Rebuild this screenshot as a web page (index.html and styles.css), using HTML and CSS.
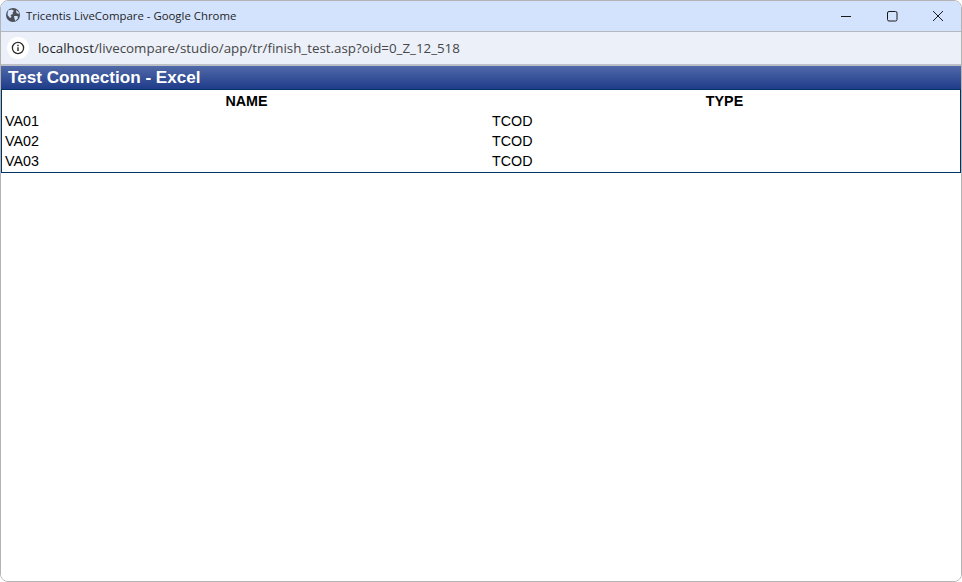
FILE: index.html
```html
<!DOCTYPE html>
<html lang="en">
<head>
<meta charset="utf-8">
<title>Tricentis LiveCompare - Google Chrome</title>
<link rel="stylesheet" href="styles.css">
</head>
<body>
<div class="window">
  <header class="titlebar">
    <svg class="globe" width="14" height="14" viewBox="0 0 14 14"><circle cx="7" cy="7" r="7" fill="#4b4f57"/><path d="M2 2.5 L6 1.5 L8 3 L6.5 4.5 L7 6 L4.5 7 L5.5 9 L4 10 L1.5 7 Z M8 8 L11.5 8 L12 10 L9.5 13 L8.5 11 Z M10 2 L12.5 4 L13 6 L10.5 5 Z" fill="#d3e3fd"/></svg>
    <span class="title">Tricentis LiveCompare - Google Chrome</span>
    <div class="controls">
      <svg width="14" height="14" viewBox="0 0 14 14"><path d="M2 8.5H12" stroke="#1a1a1a" stroke-width="1" fill="none"/></svg>
      <svg width="14" height="14" viewBox="0 0 14 14"><rect x="2.5" y="3.5" width="9.5" height="9.5" rx="1.5" stroke="#1a1a1a" stroke-width="1" fill="none"/></svg>
      <svg width="14" height="14" viewBox="0 0 14 14"><path d="M2 3L12 13M12 3L2 13" stroke="#1a1a1a" stroke-width="1" fill="none"/></svg>
    </div>
  </header>
  <div class="addressbar">
    <span class="info"><svg width="14" height="14" viewBox="0 0 14 14"><circle cx="7" cy="7" r="5.6" stroke="#2b2b2b" stroke-width="1.3" fill="none"/><path d="M7 6.2V10" stroke="#2b2b2b" stroke-width="1.4"/><path d="M7 3.8V5.2" stroke="#2b2b2b" stroke-width="1.4"/></svg></span>
    <span class="url"><span class="host">localhost</span>/livecompare/studio/app/tr/finish_test.asp?oid=0_Z_12_518</span>
  </div>
  <main class="page">
    <h1 class="heading">Test Connection - Excel</h1>
    <table class="results">
      <thead>
        <tr><th class="col-name">NAME</th><th>TYPE</th></tr>
      </thead>
      <tbody>
        <tr><td>VA01</td><td>TCOD</td></tr>
        <tr><td>VA02</td><td>TCOD</td></tr>
        <tr class="last"><td>VA03</td><td>TCOD</td></tr>
      </tbody>
    </table>
  </main>
</div>
</body>
</html>
```
FILE: styles.css
```css
* { box-sizing: border-box; }
html, body { margin: 0; padding: 0; height: 100%; background: #ffffff; overflow: hidden; }
.window {
  width: 962px;
  height: 582px;
  border: 1px solid #b4b4b4;
  border-radius: 8px;
  overflow: hidden;
  background: #ffffff;
  display: flex;
  flex-direction: column;
}
.titlebar {
  height: 31px;
  flex: none;
  background: #d3e3fd;
  display: flex;
  align-items: center;
  padding: 0 0 2px 5px;
  border-bottom: 1px solid #b4b8bf;
}
.globe { flex: none; }
.title {
  margin-left: 6px;
  font: 11.4px "Open Sans", sans-serif;
  color: #1f1f1f;
  white-space: nowrap;
}
.controls {
  margin-left: auto;
  display: flex;
  gap: 32px;
  padding-right: 16px;
  align-items: center;
}
.addressbar {
  height: 34px;
  flex: none;
  background: #ebf0f9;
  display: flex;
  align-items: center;
  padding-left: 6px;
  border-bottom: 2px solid #bcbfc5;
}
.info {
  width: 22px;
  height: 22px;
  flex: none;
  border-radius: 50%;
  background: #ffffff;
  display: flex;
  align-items: center;
  justify-content: center;
}
.url {
  margin-left: 9px;
  font: 13.35px "Open Sans", sans-serif;
  color: #474747;
  white-space: nowrap;
}
.host { color: #1f1f1f; }
.page { flex: 1; background: #ffffff; }
.heading {
  margin: 0;
  height: 23px;
  padding-left: 7px;
  background: linear-gradient(#5069a8, #1f3c8a);
  color: #ffffff;
  font: bold 17.1px/24px "Liberation Sans", Arial, sans-serif;
}
.results {
  width: 960px;
  table-layout: fixed;
  border-collapse: separate;
  border-spacing: 0;
  border: 1px solid #003366;
  font: 14.3px/20px "Liberation Sans", Arial, sans-serif;
  color: #000000;
}
.results th, .results td { padding: 0 3px; height: 20px; vertical-align: bottom; }
.results th { font-weight: bold; text-align: center; height: 21px; }
.results td { text-align: left; }
.results .last td { height: 21px; vertical-align: top; }
.results .col-name { width: 487px; padding-left: 5px; }
```
